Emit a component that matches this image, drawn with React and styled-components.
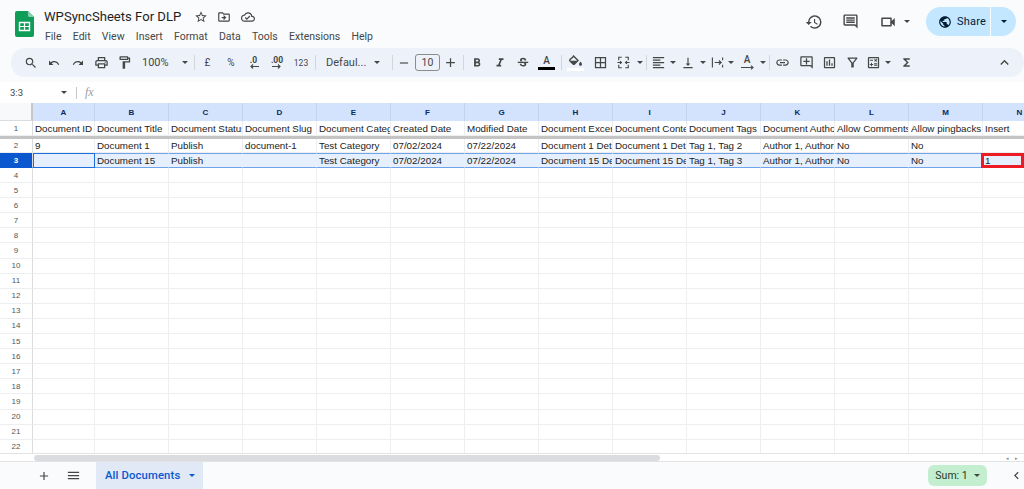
import React from "react";
import styled, { createGlobalStyle } from "styled-components";
import {
  MdSearch, MdUndo, MdRedo, MdOutlineLocalPrintshop, MdOutlineFormatPaint, MdRemove, MdAdd,
  MdFormatBold, MdFormatItalic, MdStrikethroughS, MdBorderAll, MdFormatAlignLeft,
  MdVerticalAlignBottom, MdLink, MdOutlineAddComment, MdOutlineInsertChart, MdOutlineFilterAlt,
  MdOutlineCalculate, MdFunctions, MdKeyboardArrowUp, MdHistory, MdOutlineComment, MdOutlineVideocam,
  MdPublic, MdMenu, MdChevronLeft, MdStarBorder, MdOutlineDriveFileMove, MdOutlineCloudDone,
} from "react-icons/md";

const GlobalStyle = createGlobalStyle`
  html, body { margin: 0; padding: 0; background: #f9fbfd; overflow: hidden; }
  * { box-sizing: border-box; }
  body { font-family: Roboto, "Liberation Sans", sans-serif; color: #1f1f1f; }
`;

const Page = styled.div`
  width: 1024px; height: 489px; display: flex; flex-direction: column; overflow: hidden; background: #f9fbfd;
`;
const TopBar = styled.header`
  height: 48px; display: flex; align-items: flex-start; padding: 11px 0 0 15px; flex: none;
`;
const TitleBlock = styled.div`
  margin-left: 10px; margin-top: -5px; display: flex; flex-direction: column;
`;
const TitleRow = styled.div`
  height: 21px; display: flex; align-items: center; color: #444746;
  svg { display: block; }
`;
const Title = styled.div`
  font-size: 13.1px; color: #1f1f1f; width: 145px; white-space: nowrap;
`;
const TitleIcon = styled.div`
  width: 23.5px; display: flex; justify-content: center;
`;
const MenuRow = styled.nav`
  display: flex; margin-top: 1px; font-size: 10.5px; color: #444746; gap: 11.3px; height: 16px; align-items: center; padding-left: 1px;
`;
const RightTools = styled.div`
  margin-left: auto; display: flex; align-items: center; height: 29px; margin-top: -4px; margin-right: 8px; color: #444746;
`;
const TopIcon = styled.div`
  width: ${p => p.$w}px; margin-left: ${p => p.$ml || 0}px; display: flex; justify-content: center; align-items: center;
`;
const ShareButton = styled.div`
  width: 90px; height: 29px; background: #c2e7ff; border-radius: 15px; margin-left: 16px; display: flex; align-items: center; color: #001d35;
`;
const ShareMain = styled.div`
  width: 65px; height: 100%; display: flex; align-items: center; padding-left: 12px; gap: 5px; font-size: 11px; border-right: 1px solid #f9fbfd; letter-spacing: .2px;
`;
const ShareCaret = styled.div`
  flex: 1; display: flex; justify-content: center;
`;
const Caret = styled.span`
  display: inline-block; width: 0; height: 0; border-left: 3px solid transparent; border-right: 3px solid transparent; border-top: 3px solid ${p => p.$color || "#444746"}; flex: none;
`;

const Toolbar = styled.div`
  height: 29px; margin-left: 11px; flex: none; background: #edf2fa; border-radius: 14px;
  display: flex; align-items: center; padding-left: 8px; color: #444746;
`;
const Item = styled.div`
  width: ${p => p.$w}px; height: 100%; flex: none; display: flex; align-items: center; justify-content: center;
  font-size: ${p => p.$fs || 10}px; color: #444746;
  svg { display: block; }
`;
const TextItem = styled(Item)`
  justify-content: flex-start; padding-left: ${p => p.$pl}px; gap: ${p => p.$gap}px; font-size: 11px;
`;
const Sep = styled.div`
  width: 1px; height: 15px; background: #d3d6da; flex: none; margin-left: ${p => p.$ml || 0}px;
`;
const SizeBox = styled.div`
  width: 25px; height: 17px; border: 1px solid #8a8d8c; border-radius: 3px; display: flex; align-items: center; justify-content: center; font-size: 10.5px; flex: none;
`;
const ColorA = styled.div`
  display: flex; flex-direction: column; align-items: center; font-size: 10px; line-height: 10px; font-weight: 500; width: 17px;
`;
const ColorBar = styled.div`
  width: 17px; height: 3px; background: ${p => p.$c}; margin-top: 1px;
`;
const Decimal = styled.div`
  display: flex; flex-direction: column; align-items: center; font-size: 8.5px; font-weight: 700; line-height: 8px;
`;
const Collapse = styled.div`
  margin-left: auto; width: 28px; display: flex; justify-content: flex-start;
`;

const FormulaBar = styled.div`
  height: 21px; margin-top: 5px; background: #fff; flex: none; display: flex; align-items: center; padding-left: 10px; font-size: 9.5px; color: #444746;
`;
const NameBox = styled.div`
  width: 66px; display: flex; align-items: center; justify-content: space-between; padding-right: 9px;
`;
const FormulaSep = styled.div`
  width: 1px; height: 12px; background: #c7c7c7;
`;
const Fx = styled.div`
  margin-left: 8px; font-family: "Liberation Serif", serif; font-style: italic; font-size: 12px; color: #9aa0a6;
`;

const Sheet = styled.div`
  flex: 1; background: #fff; overflow: hidden; display: flex; flex-direction: column; min-height: 0;
`;
const HeaderRow = styled.div`
  display: flex; height: 18px; flex: none;
`;
const Corner = styled.div`
  width: 33px; background: #f8f9fa; border-right: 2px solid #c7c7c7; border-bottom: 1px solid #dadce0; flex: none;
`;
const ColHead = styled.div`
  width: ${p => p.$w}px; flex: none; background: #d3e3fd; border-right: 1px solid #c3d3ee; display: flex; align-items: center; justify-content: center;
  font: 700 8px "Liberation Sans", sans-serif; color: #0b2a5c;
`;
const Row = styled.div`
  display: flex; height: ${p => p.$h}px; flex: none; position: relative; border-bottom: ${p => (p.$freeze ? "3px solid #c4c4c4" : "0")};
`;
const RowNum = styled.div`
  width: 33px; flex: none; display: flex; align-items: center; justify-content: center;
  background: ${p => (p.$active ? "#0b57d0" : "#fff")}; color: ${p => (p.$active ? "#fff" : "#555")};
  font: ${p => (p.$active ? 700 : 400)} 8px "Liberation Sans", sans-serif;
  border-right: 1px solid #dadce0; border-bottom: 1px solid ${p => (p.$active ? "#0b57d0" : "#eceef0")};
`;
const Cell = styled.div`
  width: ${p => p.$w}px; flex: none; overflow: hidden; white-space: nowrap; padding: 0 2px; display: flex; align-items: center;
  font: 9.8px "Liberation Sans", sans-serif; color: #222;
  background: ${p => (p.$sel ? "#e6effd" : "#fff")};
  border-right: 1px solid #eceef0; border-bottom: 1px solid #eceef0;
  ${p => p.$sel && "border-top: 1px solid #6fa3ea; border-bottom: 1px solid #6fa3ea; border-right-color: #e6effd;"}
  ${p => p.$active && "border: 1.5px solid #1a6ee0; background: #e6effd;"}
`;
const RedMark = styled.div`
  position: absolute; left: 981px; top: 0; width: 43px; height: 100%; border: 3px solid #ed1c24; pointer-events: none;
`;
const ScrollRow = styled.div`
  height: 8px; flex: none; display: flex; align-items: center; background: #fff; border-top: 1px solid #e3e3e3; padding-left: 34px;
`;
const Thumb = styled.div`
  width: 626px; height: 6px; background: #dadce0; border-radius: 3px;
`;
const ScrollArrows = styled.div`
  margin-left: auto; display: flex; gap: 6px; font-size: 5px; color: #888; width: 18px;
`;
const BottomBar = styled.footer`
  height: 28px; flex: none; display: flex; align-items: stretch; background: #f9fbfd; border-top: 1px solid #e3e3e3; color: #444746; padding-left: 36px;
`;
const BottomIcon = styled.div`
  width: ${p => p.$w}px; display: flex; align-items: center; justify-content: center;
`;
const Tab = styled.div`
  width: 107px; margin-left: 2px; background: #e1e9f7; color: #0b57d0; display: flex; align-items: center; padding-left: 9px; gap: 9px;
  font-size: 11.3px; font-weight: 500; letter-spacing: .12px; white-space: nowrap;
`;
const SumPill = styled.div`
  margin-left: auto; align-self: center; width: 59px; height: 21px; background: #c4eed0; border-radius: 6px; display: flex; align-items: center; justify-content: center; gap: 6px; font-size: 10.5px; color: #1f3a27;
`;
const Chevron = styled.div`
  width: 37px; display: flex; align-items: center; justify-content: center; padding-left: 21px;
`;

const cols = [
  ["A", 62], ["B", 74], ["C", 74], ["D", 74], ["E", 74], ["F", 74], ["G", 74], ["H", 74], ["I", 74], ["J", 74], ["K", 74], ["L", 74], ["M", 74], ["N", 74],
];
const rows = {
  1: ["Document ID", "Document Title", "Document Status", "Document Slug", "Document Category", "Created Date", "Modified Date", "Document Excerpt", "Document Content", "Document Tags", "Document Authors", "Allow Comments", "Allow pingbacks", "Insert"],
  2: ["9", "Document 1", "Publish", "document-1", "Test Category", "07/02/2024", "07/22/2024", "Document 1 Details", "Document 1 Details", "Tag 1, Tag 2", "Author 1, Author 2", "No", "No", ""],
  3: ["", "Document 15", "Publish", "", "Test Category", "07/02/2024", "07/22/2024", "Document 15 Details", "Document 15 Details", "Tag 1, Tag 3", "Author 1, Author 2", "No", "No", "1"],
};
const rowNumbers = Array.from({ length: 22 }, (_, i) => i + 1);

const SheetsLogo = () => (
  <svg width="19" height="26" viewBox="0 0 19 26">
    <path d="M2 0h11l6 6v18a2 2 0 0 1-2 2H2a2 2 0 0 1-2-2V2a2 2 0 0 1 2-2z" fill="#0f9d58" />
    <path d="M13 0l6 6h-4.500a1.500 1.500 0 0 1-1.500-1.500z" fill="#87ceac" />
    <path d="M4.500 11.500h10v8h-10z" fill="none" stroke="#fff" strokeWidth="1.400" />
    <path d="M4.500 15.500h10M9.500 11.500v8" stroke="#fff" strokeWidth="1.200" />
  </svg>
);
const FillIcon = () => (
  <svg width="16" height="12" viewBox="0 0 16 12">
    <path d="M5 0.500l5 5-3.500 3.500a1 1 0 0 1-1.400 0L2 6a1 1 0 0 1 0-1.400L5.500 1.500" fill="none" stroke="#444746" strokeWidth="1.400" />
    <path d="M2 5.800h7.500l-3 3.200a1 1 0 0 1-1.400 0z" fill="#444746" />
    <path d="M12.500 6.500c1 1.400 1.500 2 1.500 2.800a1.500 1.500 0 0 1-3 0c0-.8.500-1.400 1.500-2.800z" fill="#444746" />
  </svg>
);
const MergeIcon = () => (
  <svg width="13" height="13" viewBox="0 0 15 15" fill="none" stroke="#444746" strokeWidth="1.300">
    <path d="M2 5V1.500h3.500M9.500 1.500H13V5M2 10v3.500h3.500M9.500 13.500H13V10" />
    <path d="M0.500 7.500h4.500M3.500 5.800l1.700 1.700-1.700 1.700M14.500 7.500H10M11.500 5.800L9.800 7.500l1.700 1.700" />
  </svg>
);
const WrapIcon = () => (
  <svg width="13" height="13" viewBox="0 0 14 14" fill="none" stroke="#444746" strokeWidth="1.200">
    <path d="M1.500 1.500v11M12.500 1.500v3M12.500 9.500v3M4 7h7M8.500 4.800L11 7l-2.500 2.200" />
  </svg>
);
const ArrowUnder = ({ dir }) => (
  <svg width="12" height="5" viewBox="0 0 12 5" fill="none" stroke="#444746" strokeWidth="1.100">
    {dir === "left"
      ? <path d="M3 2.500h8M5 .5L3 2.500l2 2" />
      : <path d="M1 2.500h8M7 .5l2 2-2 2" />}
  </svg>
);
const TextRotateIcon = () => (
  <ColorA>A<svg width="15" height="5" viewBox="0 0 15 5" fill="none" stroke="#444746" strokeWidth="1.100"><path d="M1 2.500h12M11 .7l2 1.800-2 1.800" /></svg></ColorA>
);

const menu = ["File", "Edit", "View", "Insert", "Format", "Data", "Tools", "Extensions", "Help"];

export default function App() {
  return (
    <Page>
      <GlobalStyle />
      <TopBar>
        <SheetsLogo />
        <TitleBlock>
          <TitleRow>
            <Title>WPSyncSheets For DLP</Title>
            <TitleIcon><MdStarBorder size={14} /></TitleIcon>
            <TitleIcon><MdOutlineDriveFileMove size={14} /></TitleIcon>
            <TitleIcon><MdOutlineCloudDone size={14} /></TitleIcon>
          </TitleRow>
          <MenuRow>{menu.map(m => <span key={m}>{m}</span>)}</MenuRow>
        </TitleBlock>
        <RightTools>
          <TopIcon $w={36}><MdHistory size={18} /></TopIcon>
          <TopIcon $w={36}><MdOutlineComment size={17} /></TopIcon>
          <TopIcon $w={32} $ml={4}><MdOutlineVideocam size={18} /></TopIcon>
          <Caret />
          <ShareButton>
            <ShareMain><MdPublic size={14} />Share</ShareMain>
            <ShareCaret><Caret $color="#001d35" /></ShareCaret>
          </ShareButton>
        </RightTools>
      </TopBar>

      <Toolbar>
        <Item $w={23}><MdSearch size={14} /></Item>
        <Item $w={24}><MdUndo size={12} /></Item>
        <Item $w={24}><MdRedo size={12} /></Item>
        <Item $w={23}><MdOutlineLocalPrintshop size={15} /></Item>
        <Item $w={23}><MdOutlineFormatPaint size={15} /></Item>
        <TextItem $w={53} $pl={6} $gap={13}>100%<Caret /></TextItem>
        <Sep $ml={5} />
        <Item $w={25}>£</Item>
        <Item $w={22}>%</Item>
        <Item $w={23}><Decimal>.0<ArrowUnder dir="left" /></Decimal></Item>
        <Item $w={24}><Decimal>.00<ArrowUnder dir="right" /></Decimal></Item>
        <Item $w={24} $fs={8.500}>123</Item>
        <Sep $ml={2} />
        <TextItem $w={72} $pl={10} $gap={8}>Defaul...<Caret /></TextItem>
        <Sep $ml={4} />
        <Item $w={22}><MdRemove size={14} /></Item>
        <SizeBox>10</SizeBox>
        <Item $w={21}><MdAdd size={15} /></Item>
        <Sep $ml={2} />
        <Item $w={25}><MdFormatBold size={14} /></Item>
        <Item $w={21}><MdFormatItalic size={14} /></Item>
        <Item $w={25}><MdStrikethroughS size={14} /></Item>
        <Item $w={23}><ColorA>A<ColorBar $c="#000" /></ColorA></Item>
        <Sep $ml={3} />
        <Item $w={27}><ColorA><FillIcon /><ColorBar $c="#fff" /></ColorA></Item>
        <Item $w={23}><MdBorderAll size={15} /></Item>
        <Item $w={23}><MergeIcon /></Item>
        <Item $w={9}><Caret /></Item>
        <Sep $ml={2} />
        <Item $w={22}><MdFormatAlignLeft size={15} /></Item>
        <Item $w={8}><Caret /></Item>
        <Item $w={22}><MdVerticalAlignBottom size={14} /></Item>
        <Item $w={8}><Caret /></Item>
        <Item $w={20}><WrapIcon /></Item>
        <Item $w={8}><Caret /></Item>
        <Item $w={24}><TextRotateIcon /></Item>
        <Item $w={7}><Caret /></Item>
        <Sep $ml={3} />
        <Item $w={25}><MdLink size={15} /></Item>
        <Item $w={23}><MdOutlineAddComment size={15} /></Item>
        <Item $w={23}><MdOutlineInsertChart size={15} /></Item>
        <Item $w={22}><MdOutlineFilterAlt size={15} /></Item>
        <Item $w={21}><MdOutlineCalculate size={15} /></Item>
        <Item $w={8}><Caret /></Item>
        <Item $w={28}><MdFunctions size={13} /></Item>
        <Collapse><MdKeyboardArrowUp size={17} /></Collapse>
      </Toolbar>

      <FormulaBar>
        <NameBox>3:3<Caret /></NameBox>
        <FormulaSep />
        <Fx>fx</Fx>
      </FormulaBar>

      <Sheet>
        <HeaderRow>
          <Corner />
          {cols.map(([c, w]) => <ColHead key={c} $w={w}>{c}</ColHead>)}
        </HeaderRow>
        {rowNumbers.map(n => {
          const data = rows[n] || [];
          return (
            <Row key={n} $h={n === 1 ? 18 : n === 2 ? 14 : n === 3 ? 15 : 15.1} $freeze={n === 1}>
              <RowNum $active={n === 3}>{n}</RowNum>
              {cols.map(([c, w], i) => (
                <Cell key={c} $w={w} $sel={n === 3} $active={n === 3 && i === 0}>
                  {data[i]}
                </Cell>
              ))}
              {n === 3 && <RedMark />}
            </Row>
          );
        })}
      </Sheet>
      <ScrollRow>
        <Thumb />
        <ScrollArrows><span>◂</span><span>▸</span></ScrollArrows>
      </ScrollRow>
      <BottomBar>
        <BottomIcon $w={16}><MdAdd size={14} /></BottomIcon>
        <BottomIcon $w={42}><MdMenu size={15} /></BottomIcon>
        <Tab>All Documents<Caret $color="#0b57d0" /></Tab>
        <SumPill>Sum: 1<Caret /></SumPill>
        <Chevron><MdChevronLeft size={15} /></Chevron>
      </BottomBar>
    </Page>
  );
}
